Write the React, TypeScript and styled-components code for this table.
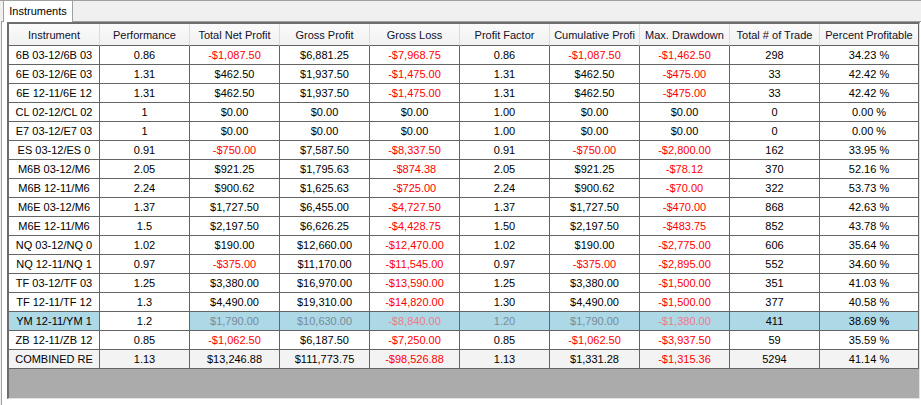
import styled, { createGlobalStyle } from 'styled-components'

const GlobalStyle = createGlobalStyle`
  html, body {
    margin: 0;
    padding: 0;
    background: #f0f0f0;
  }
  body {
    font-family: 'Liberation Sans', Arial, sans-serif;
    font-size: 11px;
    color: #000;
  }
`

type Tone = 'plain' | 'neg'

const COLUMNS = [
  'Instrument',
  'Performance',
  'Total Net Profit',
  'Gross Profit',
  'Gross Loss',
  'Profit Factor',
  'Cumulative Profi',
  'Max. Drawdown',
  'Total # of Trade',
  'Percent Profitable',
]

const ROWS: string[][] = [
  ['6B 03-12/6B 03', '0.86', '-$1,087.50', '$6,881.25', '-$7,968.75', '0.86', '-$1,087.50', '-$1,462.50', '298', '34.23 %'],
  ['6E 03-12/6E 03', '1.31', '$462.50', '$1,937.50', '-$1,475.00', '1.31', '$462.50', '-$475.00', '33', '42.42 %'],
  ['6E 12-11/6E 12', '1.31', '$462.50', '$1,937.50', '-$1,475.00', '1.31', '$462.50', '-$475.00', '33', '42.42 %'],
  ['CL 02-12/CL 02', '1', '$0.00', '$0.00', '$0.00', '1.00', '$0.00', '$0.00', '0', '0.00 %'],
  ['E7 03-12/E7 03', '1', '$0.00', '$0.00', '$0.00', '1.00', '$0.00', '$0.00', '0', '0.00 %'],
  ['ES 03-12/ES 0', '0.91', '-$750.00', '$7,587.50', '-$8,337.50', '0.91', '-$750.00', '-$2,800.00', '162', '33.95 %'],
  ['M6B 03-12/M6', '2.05', '$921.25', '$1,795.63', '-$874.38', '2.05', '$921.25', '-$78.12', '370', '52.16 %'],
  ['M6B 12-11/M6', '2.24', '$900.62', '$1,625.63', '-$725.00', '2.24', '$900.62', '-$70.00', '322', '53.73 %'],
  ['M6E 03-12/M6', '1.37', '$1,727.50', '$6,455.00', '-$4,727.50', '1.37', '$1,727.50', '-$470.00', '868', '42.63 %'],
  ['M6E 12-11/M6', '1.5', '$2,197.50', '$6,626.25', '-$4,428.75', '1.50', '$2,197.50', '-$483.75', '852', '43.78 %'],
  ['NQ 03-12/NQ 0', '1.02', '$190.00', '$12,660.00', '-$12,470.00', '1.02', '$190.00', '-$2,775.00', '606', '35.64 %'],
  ['NQ 12-11/NQ 1', '0.97', '-$375.00', '$11,170.00', '-$11,545.00', '0.97', '-$375.00', '-$2,895.00', '552', '34.60 %'],
  ['TF 03-12/TF 03', '1.25', '$3,380.00', '$16,970.00', '-$13,590.00', '1.25', '$3,380.00', '-$1,500.00', '351', '41.03 %'],
  ['TF 12-11/TF 12', '1.3', '$4,490.00', '$19,310.00', '-$14,820.00', '1.30', '$4,490.00', '-$1,500.00', '377', '40.58 %'],
  ['YM 12-11/YM 1', '1.2', '$1,790.00', '$10,630.00', '-$8,840.00', '1.20', '$1,790.00', '-$1,380.00', '411', '38.69 %'],
  ['ZB 12-11/ZB 12', '0.85', '-$1,062.50', '$6,187.50', '-$7,250.00', '0.85', '-$1,062.50', '-$3,937.50', '59', '35.59 %'],
  ['COMBINED RE', '1.13', '$13,246.88', '$111,773.75', '-$98,526.88', '1.13', '$1,331.28', '-$1,315.36', '5294', '41.14 %'],
]

const SELECTED_ROW = 14
const TOTAL_ROW = ROWS.length - 1

const App = () => {
  return (
    <>
      <GlobalStyle />
      <Window>
        <TabStrip>
          <Tab>Instruments</Tab>
        </TabStrip>
        <TabPage>
          <GridView>
            <Table>
              {COLUMNS.map((name, i) => (
                <HeaderCell key={name} $last={i === COLUMNS.length - 1}>
                  {name}
                </HeaderCell>
              ))}
              {ROWS.map((row, r) =>
                row.map((value, c) => {
                  const selected = r === SELECTED_ROW && c !== 1
                  const tone: Tone = value.startsWith('-') ? 'neg' : 'plain'
                  const dim = selected && c >= 2 && c <= 7
                  return (
                    <Cell
                      key={`${r}-${c}`}
                      $tone={tone}
                      $selected={selected}
                      $dim={dim}
                      $total={r === TOTAL_ROW}
                    >
                      {value}
                    </Cell>
                  )
                })
              )}
            </Table>
          </GridView>
        </TabPage>
      </Window>
    </>
  )
}

export default App

/* ****************************************************************
  Instruments grid (WinForms DataGridView look)
*******************************************************************/

const Window = styled.div`
  width: 921px;
  height: 405px;
  display: flex;
  flex-direction: column;
  border-top: 1px solid #a0a0a0;
  box-sizing: border-box;
`

const TabStrip = styled.div`
  display: flex;
  height: 20px;
  padding-left: 3px;
`

const Tab = styled.div`
  width: 70px;
  box-sizing: border-box;
  height: 21px;
  margin-bottom: -1px;
  position: relative;
  z-index: 1;
  background: #fff;
  border: 1px solid #a0a0a0;
  border-top: none;
  border-bottom: none;
  display: flex;
  align-items: center;
  justify-content: center;
  padding-bottom: 1px;
  color: #000;
`

const TabPage = styled.div`
  flex: 1;
  margin-left: 1px;
  background: #fff;
  border-top: 1px solid #a0a0a0;
  border-left: 1px solid #a0a0a0;
  padding-left: 5px;
`

const GridView = styled.div`
  width: 913px;
  height: 377px;
  box-sizing: border-box;
  background: #ababab;
  border-top: 2px solid #6d6d6d;
  border-left: 2px solid #6d6d6d;
  border-right: 1px solid #e3e3e3;
  border-bottom: 1px solid #e3e3e3;
`

const Table = styled.div`
  display: grid;
  grid-template-columns: 91px repeat(8, 90px) 99px;
  grid-auto-rows: 19px;
  grid-template-rows: 22px;
`

const HeaderCell = styled.div<{ $last: boolean }>`
  box-sizing: border-box;
  display: flex;
  align-items: center;
  justify-content: center;
  background: linear-gradient(#fbfbfb, #f1f1f1);
  border-right: 1px solid ${p => (p.$last ? '#646464' : '#dcdcdc')};
  border-bottom: 1px solid #646464;
  color: #10102a;
  white-space: nowrap;
  overflow: hidden;
  padding-top: 1px;
`

const Cell = styled.div<{ $tone: Tone; $selected: boolean; $dim: boolean; $total: boolean }>`
  box-sizing: border-box;
  display: flex;
  align-items: center;
  justify-content: center;
  white-space: nowrap;
  overflow: hidden;
  border-right: 1px solid #646464;
  border-bottom: 1px solid #646464;
  background: ${p => (p.$selected ? '#add8e6' : p.$total ? '#f3f3f3' : '#fff')};
  color: ${p =>
    p.$dim
      ? p.$tone === 'neg'
        ? '#ee7a8a'
        : '#778b99'
      : p.$tone === 'neg'
        ? '#ff0000'
        : '#000'};
`
